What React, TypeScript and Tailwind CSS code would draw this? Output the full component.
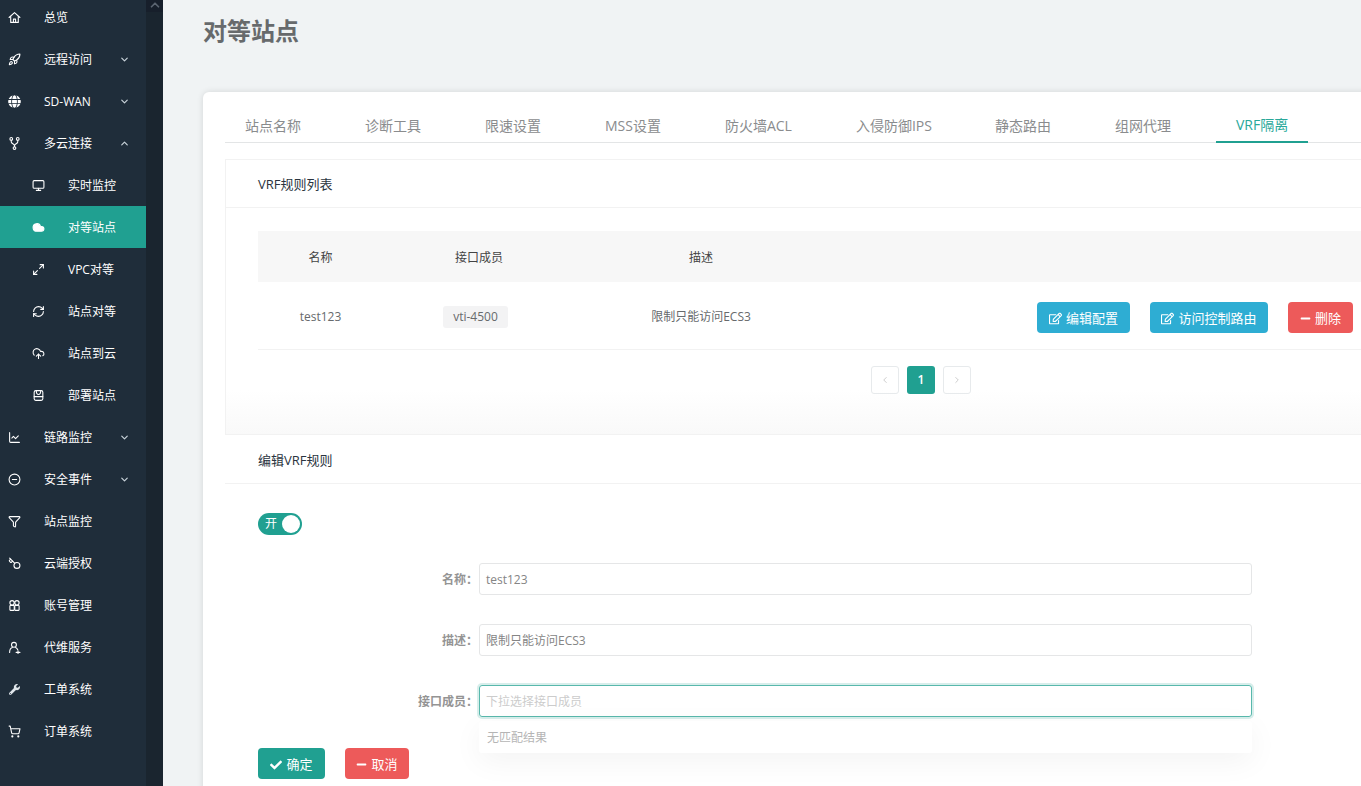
import { ChevronDown, ChevronLeft, ChevronRight, ChevronUp, Cloud, CloudUpload, Filter, Key, LineChart, Maximize2, Monitor, MinusCircle, RefreshCw, Rocket, ShoppingCart } from "lucide-react";
import { FaCheck, FaGlobe, FaMinus, FaRegEdit, FaWrench } from "react-icons/fa";

const font = "font-['Open_Sans','Noto_Sans_CJK_SC',sans-serif]";

type IconProps = { size?: number; strokeWidth?: number; fill?: string; className?: string };

function Line({ size = 13, strokeWidth = 2, className, children }: IconProps & { children: React.ReactNode }) {
    return (
        <svg width={size} height={size} viewBox="0 0 24 24" fill="none" stroke="currentColor" strokeWidth={strokeWidth} strokeLinecap="round" strokeLinejoin="round" className={className}>
            {children}
        </svg>
    );
}

const HomeIcon = (p: IconProps) => (
    <Line {...p}>
        <path d="M2 12l10-9 10 9" />
        <path d="M5 10v11h14V10" />
        <path d="M10 21v-6h4v6" />
    </Line>
);
const ForkIcon = (p: IconProps) => (
    <Line {...p}>
        <circle cx="6" cy="3.5" r="2.5" />
        <circle cx="18" cy="3.5" r="2.5" />
        <circle cx="12" cy="20.5" r="2.5" />
        <path d="M6 6v3c0 3 6 4 6 7v2M18 6v3c0 3-6 4-6 7" />
    </Line>
);
const BoxIcon = (p: IconProps) => (
    <Line {...p}>
        <rect x="4" y="3" width="16" height="18" rx="3" />
        <path d="M8 3c0 5 2 7 4 7s4-2 4-7M4 14h16" />
    </Line>
);
const AccountIcon = (p: IconProps) => (
    <Line {...p}>
        <circle cx="7.5" cy="7" r="4" />
        <circle cx="16.5" cy="7" r="4" />
        <rect x="3.5" y="12" width="8" height="9" rx="1" />
        <rect x="12.5" y="12" width="8" height="9" rx="1" />
    </Line>
);
const ServiceIcon = (p: IconProps) => (
    <Line {...p}>
        <circle cx="11" cy="7" r="4.5" />
        <path d="M3 21c0-5 2-8 5-9M14 12c2 1 3 2 4 4M15 21h7M18.5 18v5" />
    </Line>
);
const GlobeIcon = ({ className }: IconProps) => <FaGlobe size={13} color="white" className={className} />;
const WrenchIcon = ({ className }: IconProps) => <FaWrench size={11} color="#dfe5ea" className={className} />;

const menu = [
    { label: "总览", icon: HomeIcon },
    { label: "远程访问", icon: Rocket, arrow: "down" },
    { label: "SD-WAN", icon: GlobeIcon, arrow: "down" },
    { label: "多云连接", icon: ForkIcon, arrow: "up" },
    { label: "实时监控", icon: Monitor, sub: true },
    { label: "对等站点", icon: Cloud, sub: true, active: true },
    { label: "VPC对等", icon: Maximize2, sub: true },
    { label: "站点对等", icon: RefreshCw, sub: true },
    { label: "站点到云", icon: CloudUpload, sub: true },
    { label: "部署站点", icon: BoxIcon, sub: true },
    { label: "链路监控", icon: LineChart, arrow: "down" },
    { label: "安全事件", icon: MinusCircle, arrow: "down" },
    { label: "站点监控", icon: Filter },
    { label: "云端授权", icon: Key, flip: true },
    { label: "账号管理", icon: AccountIcon },
    { label: "代维服务", icon: ServiceIcon },
    { label: "工单系统", icon: WrenchIcon },
    { label: "订单系统", icon: ShoppingCart },
];

const tabs = ["站点名称", "诊断工具", "限速设置", "MSS设置", "防火墙ACL", "入侵防御IPS", "静态路由", "组网代理", "VRF隔离"];

function Sidebar() {
    return (
        <aside className="flex w-[163px] shrink-0 bg-[#1a252f]">
            <nav className="-mt-1 w-[146px] shrink-0 bg-[#1f2d3a]">
                {menu.map((item) => {
                    const Icon = item.icon as React.ComponentType<IconProps>;
                    return (
                        <div
                            key={item.label}
                            className={`flex h-[42px] items-center text-xs text-white ${item.sub ? "pl-8" : "pl-2"} ${item.active ? "bg-[#20a091]" : ""}`}
                        >
                            <span className="flex h-[13px] w-[13px] shrink-0 items-center justify-center">
                                <Icon size={13} strokeWidth={2} fill={item.active ? "white" : "none"} className={item.flip ? "-scale-x-100" : ""} />
                            </span>
                            <span className="ml-[23px] flex-1 pt-0.5">{item.label}</span>
                            {item.arrow === "down" && <ChevronDown size={11} strokeWidth={2.6} className="mr-4 text-[#c9d3da]" />}
                            {item.arrow === "up" && <ChevronUp size={11} strokeWidth={2.6} className="mr-4 text-[#c9d3da]" />}
                        </div>
                    );
                })}
            </nav>
            <div className="h-3 w-full bg-[#171f2b] text-[#5a6470]">
                <ChevronUp size={14} strokeWidth={3} className="mx-auto -mt-0.5" />
            </div>
        </aside>
    );
}

function ActionButton({ className, icon, label }: { className: string; icon: React.ReactNode; label: string }) {
    return (
        <button className={`flex h-[31px] items-center justify-center gap-1 rounded pt-0.5 text-[13px] text-white ${className}`}>
            {icon}
            {label}
        </button>
    );
}

function Field({ label, value, placeholder, focus }: { label: string; value?: string; placeholder?: string; focus?: boolean }) {
    return (
        <div className="flex items-center">
            <label className="w-[253px] pt-0.5 text-right text-xs font-bold text-[#949494]">{label}：</label>
            <div
                className={`ml-px flex h-8 w-[773px] items-center rounded-[3px] border px-[6px] pt-0.5 text-xs ${focus ? "border-[#58b8ac] text-[#cccccc] shadow-[0_0_0_2px_rgba(32,160,145,0.18)]" : "border-[#e5e6e7] text-[#858585]"}`}
            >
                {value ?? placeholder}
            </div>
        </div>
    );
}

function RulePanel() {
    return (
        <section className="h-[276px] border border-r-0 border-[#f2f2f2] bg-linear-to-b from-white from-[84%] to-[#f9f9f9]">
            <h3 className="flex h-12 items-center border-b border-[#f2f2f2] pl-8 pt-0.5 text-[13px] text-[#2a3440]">VRF规则列表</h3>
            <div className="ml-8 mt-[23px]">
                <div className="grid h-[51px] grid-cols-[125px_192px_252px_1fr] items-center bg-[#f7f7f7] pt-0.5 text-center text-xs text-[#444]">
                    <span>名称</span>
                    <span>接口成员</span>
                    <span>描述</span>
                </div>
                <div className="grid h-[68px] grid-cols-[125px_192px_252px_1fr] items-center border-b border-[#f2f2f2] pt-0.5 text-center text-xs text-[#676a6c]">
                    <span>test123</span>
                    <span className="ml-[60px] flex h-[22px] w-[65px] items-center justify-center rounded-[3px] bg-[#f3f3f4]">vti-4500</span>
                    <span>限制只能访问ECS3</span>
                    <div className="mt-0.5 flex gap-5 pl-[210px]">
                        <ActionButton className="w-[93px] bg-[#2eadd3]" icon={<FaRegEdit size={13} />} label="编辑配置" />
                        <ActionButton className="w-[118px] bg-[#2eadd3]" icon={<FaRegEdit size={13} />} label="访问控制路由" />
                        <ActionButton className="w-[65px] bg-[#ed5a5a]" icon={<FaMinus size={11} />} label="删除" />
                    </div>
                </div>
                <div className="ml-[613px] mt-4 flex gap-2">
                    <span className="flex h-7 w-7 items-center justify-center rounded-[3px] border border-[#e7eaec] text-[#c4c4c4]">
                        <ChevronLeft size={10} />
                    </span>
                    <span className="flex h-7 w-7 items-center justify-center rounded-[3px] bg-[#20a091] text-xs font-semibold text-white">1</span>
                    <span className="flex h-7 w-7 items-center justify-center rounded-[3px] border border-[#e7eaec] text-[#c4c4c4]">
                        <ChevronRight size={10} />
                    </span>
                </div>
            </div>
        </section>
    );
}

function EditPanel() {
    return (
        <section className="relative">
            <h3 className="flex h-[49px] items-center border-b border-[#f2f2f2] pl-[33px] pt-1 text-[13px] text-[#2a3440]">编辑VRF规则</h3>
            <div className="ml-[33px] mt-[29px] flex h-[22px] w-11 items-center justify-between rounded-full bg-[#20a091] pl-[7px] pr-[2px] text-xs text-white">
                开
                <span className="h-[18px] w-[18px] rounded-full bg-white" />
            </div>
            <div className="mt-7 flex flex-col gap-[29px]">
                <Field label="名称" value="test123" />
                <Field label="描述" value="限制只能访问ECS3" />
                <Field label="接口成员" placeholder="下拉选择接口成员" focus />
            </div>
            <div className="ml-[33px] mt-[31px] flex gap-5 pb-8">
                <ActionButton className="w-[67px] bg-[#20a091]" icon={<FaCheck size={12} />} label="确定" />
                <ActionButton className="w-[64px] bg-[#ed5a5a]" icon={<FaMinus size={11} />} label="取消" />
            </div>
            <div className="absolute left-[254px] top-[286px] flex h-8 w-[773px] items-center rounded-[3px] bg-white px-2 pt-0.5 text-xs text-[#b5b5b5] shadow-[0_8px_30px_rgba(0,0,0,0.05)]">
                无匹配结果
            </div>
        </section>
    );
}

export default function App() {
    return (
        <div className={`flex h-[786px] w-[1361px] overflow-hidden bg-[#f0f3f4] ${font}`}>
            <Sidebar />
            <main className="min-w-0 flex-1 pl-10">
                <h1 className="mt-[14px] text-2xl font-bold leading-[34px] text-[#676a6c]">对等站点</h1>
                <div className="mt-[44px] w-[1200px] rounded-t-md bg-white px-[22px] pt-[14px] shadow-[0_0_6px_rgba(0,0,0,0.12)]">
                    <div className="flex h-[37px] gap-6 border-b border-[#e3e5e6]">
                        {tabs.map((tab) => (
                            <span
                                key={tab}
                                className={`-mb-px flex items-center px-5 pt-0.5 text-sm ${tab === "VRF隔离" ? "ml-px border-b-2 border-[#20a091] text-[#2aa89a]" : "text-[#8a8c8e]"} ${tab === "入侵防御IPS" ? "-mr-px" : ""}`}
                            >
                                {tab}
                            </span>
                        ))}
                    </div>
                    <div className="mt-4">
                        <RulePanel />
                        <EditPanel />
                    </div>
                </div>
            </main>
        </div>
    );
}
